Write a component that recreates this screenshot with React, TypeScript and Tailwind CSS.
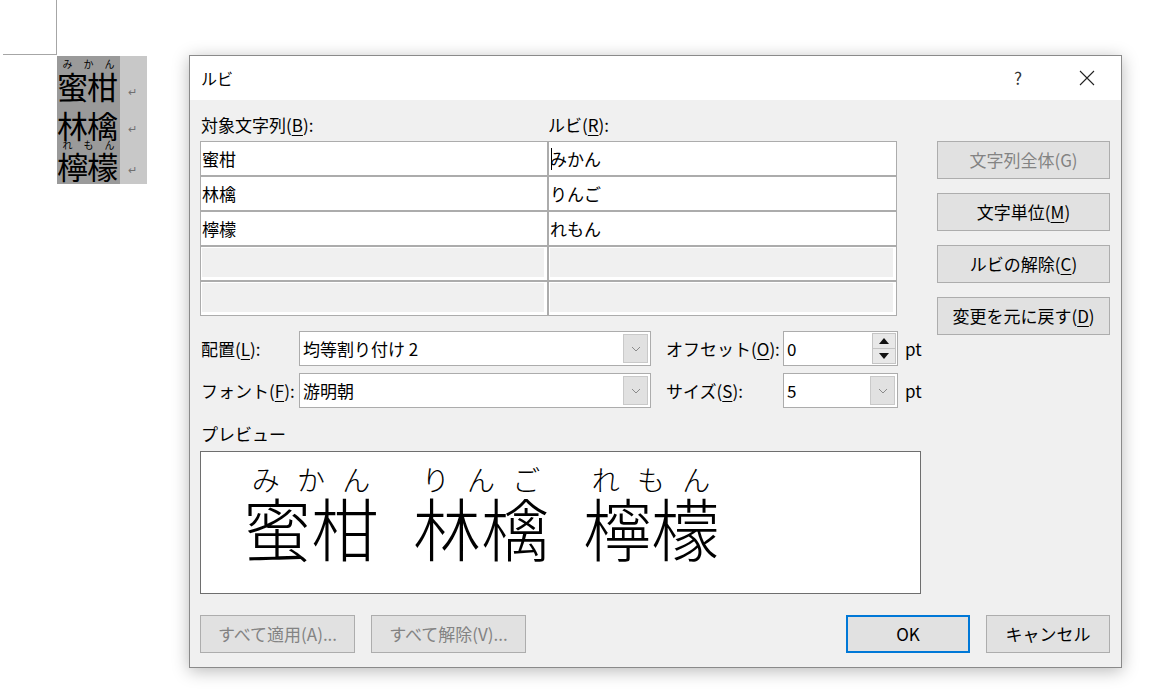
import React from 'react';

const jp = "font-['Noto_Sans_CJK_JP',sans-serif]";

function Key({ k }: { k: string }) {
  return <span className="underline underline-offset-[3px] decoration-1">{k}</span>;
}

function Chevron() {
  return (
    <svg width="10" height="6" viewBox="0 0 10 6" fill="none">
      <path d="M1 1 L5 5 L9 1" stroke="#8a8a8a" strokeWidth="1" />
    </svg>
  );
}

function DropButton() {
  return (
    <div className="w-[25px] self-stretch bg-[#e1e1e1] border border-[#c9c9c9] flex items-center justify-center">
      <Chevron />
    </div>
  );
}

function Cell({ text, caret, disabled }: { text?: string; caret?: boolean; disabled?: boolean }) {
  if (disabled) {
    return (
      <div className="h-[35px] border border-[#acacac] bg-white p-[1px]">
        <div className="h-full bg-[#f0f0f0] border-b-[2px] border-r-[2px] border-white"></div>
      </div>
    );
  }
  return (
    <div className="h-[35px] border border-[#acacac] bg-white flex items-center pl-[1px] text-[17px] relative">
      {caret && <span className="absolute left-[2px] top-[6px] w-px h-[22px] bg-black"></span>}
      {text}
    </div>
  );
}

function SideButton({ children, disabled }: { children: React.ReactNode; disabled?: boolean }) {
  return (
    <div
      className={`h-[38px] w-[173px] bg-[#e1e1e1] border border-[#adadad] flex items-center justify-center text-[17px] ${
        disabled ? 'text-[#838383]' : 'text-black'
      }`}
    >
      {children}
    </div>
  );
}

function RubyGroup({ ruby, base }: { ruby: string[]; base: string }) {
  return (
    <div className="flex flex-col w-[136px]">
      <div className="h-[28px] flex justify-around text-[28px] leading-none font-light">
        {ruby.map((r, i) => (
          <span key={i}>{r}</span>
        ))}
      </div>
      <div className="h-[68px] text-[68px] leading-none font-light">{base}</div>
    </div>
  );
}

function DocLine({ ruby, base, rubyH, markPb }: { ruby?: string[]; base: string; rubyH: string; markPb: string }) {
  return (
    <div className="flex">
      <div className="w-[63px] flex flex-col">
        {ruby && (
          <div className={`${rubyH} flex justify-around text-[10px] leading-none`}>
            {ruby.map((r, i) => (
              <span key={i}>{r}</span>
            ))}
          </div>
        )}
        <div className="h-[31px] text-[31px] leading-none tracking-[-1px]">{base}</div>
      </div>
      <div className={`pl-[8px] self-end ${markPb} text-[11px] leading-none text-[#707070]`}>↵</div>
    </div>
  );
}

export default function App() {
  return (
    <div className={`relative w-[1168px] h-[695px] bg-white overflow-hidden ${jp} text-black`}>
      {/* page corner mark */}
      <div className="absolute left-[56px] top-0 w-px h-[55px] bg-[#a6a6a6]"></div>
      <div className="absolute left-[3px] top-[54px] w-[54px] h-px bg-[#a6a6a6]"></div>

      {/* selected document text */}
      <div className="absolute left-[57px] top-[56px] w-[90px] h-[128px] bg-[#c8c8c8] flex">
        <div className="w-[63px] bg-[#9a9a9a]"></div>
        <div className="absolute inset-0 flex flex-col pt-[3px]">
          <DocLine ruby={['み', 'か', 'ん']} base="蜜柑" rubyH="h-[11px]" markPb="pb-[4px]" />
          <div className="h-[8px]"></div>
          <DocLine base="林檎" rubyH="" markPb="pb-[6px]" />
          <DocLine ruby={['れ', 'も', 'ん']} base="檸檬" rubyH="h-[10px]" markPb="pb-[6px]" />
        </div>
      </div>

      {/* dialog */}
      <div className="absolute left-[189px] top-[55px] w-[933px] h-[613px] border border-[#8a8a8a] bg-[#f0f0f0] shadow-[0_3px_16px_rgba(0,0,0,0.28)] flex flex-col">
        {/* title bar */}
        <div className="h-[44px] bg-white flex items-center">
          <div className="pl-[11px] text-[16px]">ルビ</div>
          <div className="ml-auto w-[46px] text-center text-[17px] text-[#333]">?</div>
          <div className="w-[23px]"></div>
          <div className="w-[46px] flex items-center justify-center">
            <svg width="16" height="16" viewBox="0 0 16 16">
              <path d="M1 1 L15 15 M15 1 L1 15" stroke="#222" strokeWidth="1.1" />
            </svg>
          </div>
          <div className="w-[11px]"></div>
        </div>

        {/* body */}
        <div className="flex-1 flex flex-col pl-[10px] pr-[11px]">
          <div className="flex">
            {/* left column */}
            <div className="w-[722px] flex flex-col">
              <div className="grid grid-cols-[348px_349px] pt-[15px] pb-[6px] text-[17px] leading-[20px]">
                <div className="pl-[1px]">
                  対象文字列(<Key k="B" />):
                </div>
                <div>
                  ルビ(<Key k="R" />):
                </div>
              </div>
              <div className="grid grid-cols-[348px_349px] w-[697px]">
                <Cell text="蜜柑" />
                <Cell text="みかん" caret />
                <Cell text="林檎" />
                <Cell text="りんご" />
                <Cell text="檸檬" />
                <Cell text="れもん" />
                <Cell disabled />
                <Cell disabled />
                <Cell disabled />
                <Cell disabled />
              </div>

              {/* 配置 row */}
              <div className="flex items-center h-[35px] mt-[15px] text-[17px] whitespace-nowrap">
                <div className="w-[99px] pl-[1px]">
                  配置(<Key k="L" />):
                </div>
                <div className="w-[352px] h-full bg-white border border-[#acacac] flex p-[2px] pl-[3px]">
                  <div className="flex-1 flex items-center">均等割り付け 2</div>
                  <DropButton />
                </div>
                <div className="w-[132px] pl-[15px]">
                  オフセット(<Key k="O" />):
                </div>
                <div className="w-[115px] h-full bg-white border border-[#acacac] flex p-[1px] pl-[3px]">
                  <div className="flex-1 flex items-center">0</div>
                  <div className="w-[24px] flex flex-col">
                    <div className="flex-1 bg-[#e8e8e8] border border-[#c4c4c4] flex items-center justify-center">
                      <svg width="10" height="6" viewBox="0 0 10 6">
                        <path d="M0 6 L5 0 L10 6 Z" fill="#111" />
                      </svg>
                    </div>
                    <div className="flex-1 bg-[#e8e8e8] border border-t-0 border-[#c4c4c4] flex items-center justify-center">
                      <svg width="10" height="6" viewBox="0 0 10 6">
                        <path d="M0 0 L10 0 L5 6 Z" fill="#111" />
                      </svg>
                    </div>
                  </div>
                </div>
                <div className="pl-[7px] text-[17px]">pt</div>
              </div>

              {/* フォント row */}
              <div className="flex items-center h-[35px] mt-[7px] text-[17px] whitespace-nowrap">
                <div className="w-[99px] pl-[1px]">
                  フォント(<Key k="F" />):
                </div>
                <div className="w-[352px] h-full bg-white border border-[#acacac] flex p-[2px] pl-[3px]">
                  <div className="flex-1 flex items-center">游明朝</div>
                  <DropButton />
                </div>
                <div className="w-[132px] pl-[15px]">
                  サイズ(<Key k="S" />):
                </div>
                <div className="w-[115px] h-full bg-white border border-[#acacac] flex p-[2px] pl-[3px]">
                  <div className="flex-1 flex items-center">5</div>
                  <DropButton />
                </div>
                <div className="pl-[7px] text-[17px]">pt</div>
              </div>

              <div className="mt-[16px] pl-[1px] text-[17px] leading-[20px]">プレビュー</div>
              <div className="mt-[7px] w-[721px] h-[143px] bg-white border border-[#6e6e6e] pl-[42px] pt-[13px] flex gap-[34px] items-start">
                <RubyGroup ruby={['み', 'か', 'ん']} base="蜜柑" />
                <RubyGroup ruby={['り', 'ん', 'ご']} base="林檎" />
                <RubyGroup ruby={['れ', 'も', 'ん']} base="檸檬" />
              </div>
            </div>

            {/* right buttons */}
            <div className="ml-[15px] pt-[41px] flex flex-col gap-[14px]">
              <SideButton disabled>文字列全体(G)</SideButton>
              <SideButton>
                文字単位(<Key k="M" />)
              </SideButton>
              <SideButton>
                ルビの解除(<Key k="C" />)
              </SideButton>
              <SideButton>
                変更を元に戻す(<Key k="D" />)
              </SideButton>
            </div>
          </div>

          {/* bottom buttons */}
          <div className="mt-[21px] flex items-center text-[17px]">
            <div className="w-[155px] h-[38px] bg-[#e1e1e1] border border-[#adadad] flex items-center justify-center text-[#838383]">
              すべて適用(A)...
            </div>
            <div className="ml-[16px] w-[155px] h-[38px] bg-[#e1e1e1] border border-[#adadad] flex items-center justify-center text-[#838383]">
              すべて解除(V)...
            </div>
            <div className="ml-auto w-[124px] h-[38px] bg-[#e1e1e1] border-2 border-[#0078d7] flex items-center justify-center">
              OK
            </div>
            <div className="ml-[16px] w-[124px] h-[38px] bg-[#e1e1e1] border border-[#adadad] flex items-center justify-center">
              キャンセル
            </div>
          </div>
        </div>
      </div>
    </div>
  );
}
